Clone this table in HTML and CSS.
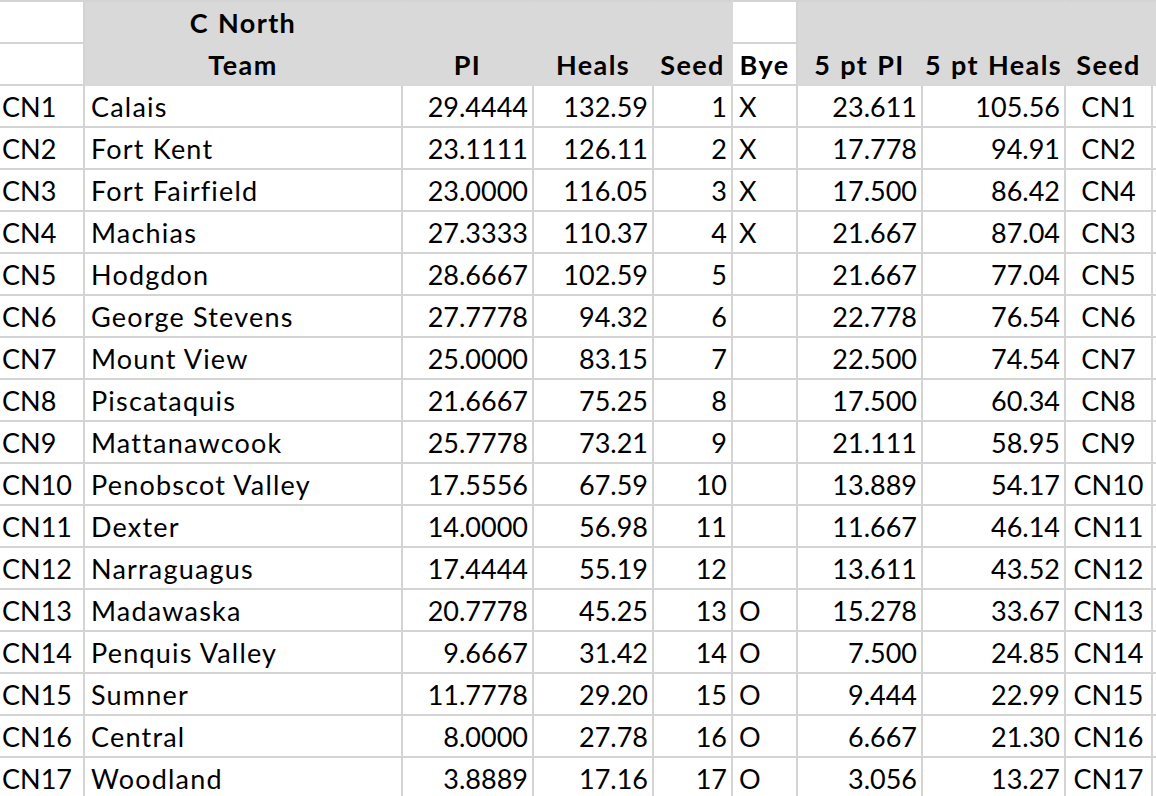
FILE: index.html
```html
<!DOCTYPE html>
<html lang="en">
<head>
<meta charset="utf-8">
<title>C North</title>
<link rel="stylesheet" href="styles.css">
</head>
<body>
<table class="sheet">
  <colgroup>
    <col class="c-a"><col class="c-b"><col class="c-c"><col class="c-d"><col class="c-e"><col class="c-f"><col class="c-g"><col class="c-h"><col class="c-i"><col class="c-j">
  </colgroup>
  <tr class="top">
    <td></td>
    <td class="hd ctr">C North</td>
    <td class="hd"></td>
    <td class="hd"></td>
    <td class="hd"></td>
    <td class="wh"></td>
    <td class="hd"></td>
    <td class="hd"></td>
    <td class="hd"></td>
    <td class="hd"></td>
  </tr>
  <tr class="sub">
    <td></td>
    <td class="hd ctr">Team</td>
    <td class="hd ctr">PI</td>
    <td class="hd ctr">Heals</td>
    <td class="hd ctr">Seed</td>
    <td class="wh ctr b">Bye</td>
    <td class="hd ctr">5 pt PI</td>
    <td class="hd ctr">5 pt Heals</td>
    <td class="hd ctr">Seed</td>
    <td class="hd"></td>
  </tr>
  <tr><td class="l0">CN1</td><td class="l">Calais</td><td class="r">29.4444</td><td class="r">132.59</td><td class="r">1</td><td class="l">X</td><td class="r">23.611</td><td class="r">105.56</td><td class="ctr">CN1</td><td></td></tr>
  <tr><td class="l0">CN2</td><td class="l">Fort Kent</td><td class="r">23.1111</td><td class="r">126.11</td><td class="r">2</td><td class="l">X</td><td class="r">17.778</td><td class="r">94.91</td><td class="ctr">CN2</td><td></td></tr>
  <tr><td class="l0">CN3</td><td class="l">Fort Fairfield</td><td class="r">23.0000</td><td class="r">116.05</td><td class="r">3</td><td class="l">X</td><td class="r">17.500</td><td class="r">86.42</td><td class="ctr">CN4</td><td></td></tr>
  <tr><td class="l0">CN4</td><td class="l">Machias</td><td class="r">27.3333</td><td class="r">110.37</td><td class="r">4</td><td class="l">X</td><td class="r">21.667</td><td class="r">87.04</td><td class="ctr">CN3</td><td></td></tr>
  <tr><td class="l0">CN5</td><td class="l">Hodgdon</td><td class="r">28.6667</td><td class="r">102.59</td><td class="r">5</td><td class="l"></td><td class="r">21.667</td><td class="r">77.04</td><td class="ctr">CN5</td><td></td></tr>
  <tr><td class="l0">CN6</td><td class="l">George Stevens</td><td class="r">27.7778</td><td class="r">94.32</td><td class="r">6</td><td class="l"></td><td class="r">22.778</td><td class="r">76.54</td><td class="ctr">CN6</td><td></td></tr>
  <tr><td class="l0">CN7</td><td class="l">Mount View</td><td class="r">25.0000</td><td class="r">83.15</td><td class="r">7</td><td class="l"></td><td class="r">22.500</td><td class="r">74.54</td><td class="ctr">CN7</td><td></td></tr>
  <tr><td class="l0">CN8</td><td class="l">Piscataquis</td><td class="r">21.6667</td><td class="r">75.25</td><td class="r">8</td><td class="l"></td><td class="r">17.500</td><td class="r">60.34</td><td class="ctr">CN8</td><td></td></tr>
  <tr><td class="l0">CN9</td><td class="l">Mattanawcook</td><td class="r">25.7778</td><td class="r">73.21</td><td class="r">9</td><td class="l"></td><td class="r">21.111</td><td class="r">58.95</td><td class="ctr">CN9</td><td></td></tr>
  <tr><td class="l0">CN10</td><td class="l">Penobscot Valley</td><td class="r">17.5556</td><td class="r">67.59</td><td class="r">10</td><td class="l"></td><td class="r">13.889</td><td class="r">54.17</td><td class="ctr">CN10</td><td></td></tr>
  <tr><td class="l0">CN11</td><td class="l">Dexter</td><td class="r">14.0000</td><td class="r">56.98</td><td class="r">11</td><td class="l"></td><td class="r">11.667</td><td class="r">46.14</td><td class="ctr">CN11</td><td></td></tr>
  <tr><td class="l0">CN12</td><td class="l">Narraguagus</td><td class="r">17.4444</td><td class="r">55.19</td><td class="r">12</td><td class="l"></td><td class="r">13.611</td><td class="r">43.52</td><td class="ctr">CN12</td><td></td></tr>
  <tr><td class="l0">CN13</td><td class="l">Madawaska</td><td class="r">20.7778</td><td class="r">45.25</td><td class="r">13</td><td class="l">O</td><td class="r">15.278</td><td class="r">33.67</td><td class="ctr">CN13</td><td></td></tr>
  <tr><td class="l0">CN14</td><td class="l">Penquis Valley</td><td class="r">9.6667</td><td class="r">31.42</td><td class="r">14</td><td class="l">O</td><td class="r">7.500</td><td class="r">24.85</td><td class="ctr">CN14</td><td></td></tr>
  <tr><td class="l0">CN15</td><td class="l">Sumner</td><td class="r">11.7778</td><td class="r">29.20</td><td class="r">15</td><td class="l">O</td><td class="r">9.444</td><td class="r">22.99</td><td class="ctr">CN15</td><td></td></tr>
  <tr><td class="l0">CN16</td><td class="l">Central</td><td class="r">8.0000</td><td class="r">27.78</td><td class="r">16</td><td class="l">O</td><td class="r">6.667</td><td class="r">21.30</td><td class="ctr">CN16</td><td></td></tr>
  <tr><td class="l0">CN17</td><td class="l">Woodland</td><td class="r">3.8889</td><td class="r">17.16</td><td class="r">17</td><td class="l">O</td><td class="r">3.056</td><td class="r">13.27</td><td class="ctr">CN17</td><td></td></tr>
</table>
</body>
</html>
```
FILE: styles.css
```css
html, body {
  margin: 0;
  padding: 0;
  background: #ffffff;
  overflow: hidden;
}

.sheet {
  border-collapse: separate;
  border-spacing: 0;
  table-layout: fixed;
  width: 1253px;
  font-family: "Lato", "Open Sans", sans-serif;
  font-size: 27px;
  color: #000000;
}

.c-a { width: 85px; }
.c-b { width: 318px; }
.c-c { width: 131px; }
.c-d { width: 120px; }
.c-e { width: 79px; }
.c-f { width: 65px; }
.c-g { width: 125px; }
.c-h { width: 143px; }
.c-i { width: 87px; }
.c-j { width: 100px; }

.sheet td {
  box-sizing: border-box;
  height: 42px;
  padding: 2px 0 0 0;
  line-height: 38px;
  vertical-align: top;
  white-space: nowrap;
  overflow: hidden;
  border-right: 2px solid #d4d4d4;
  border-bottom: 2px solid #d4d4d4;
}

.sheet tr.top td {
  height: 44px;
  border-top: 2px solid #d4d4d4;
}

.sheet tr.sub td {
  padding-top: 1px;
  line-height: 39px;
}

.sheet td.hd {
  background: #d9d9d9;
  border-color: #d9d9d9;
  font-weight: 700;
  letter-spacing: 1.4px;
  word-spacing: 1px;
}

.sheet td.b {
  font-weight: 700;
  letter-spacing: 1.4px;
}

.sheet td.ctr { text-align: center; }
.sheet td.r { text-align: right; padding-right: 4px; }
.sheet td.l { text-align: left; padding-left: 6px; letter-spacing: 1.2px; }
.sheet td.l0 { text-align: left; padding-left: 2px; }
```
